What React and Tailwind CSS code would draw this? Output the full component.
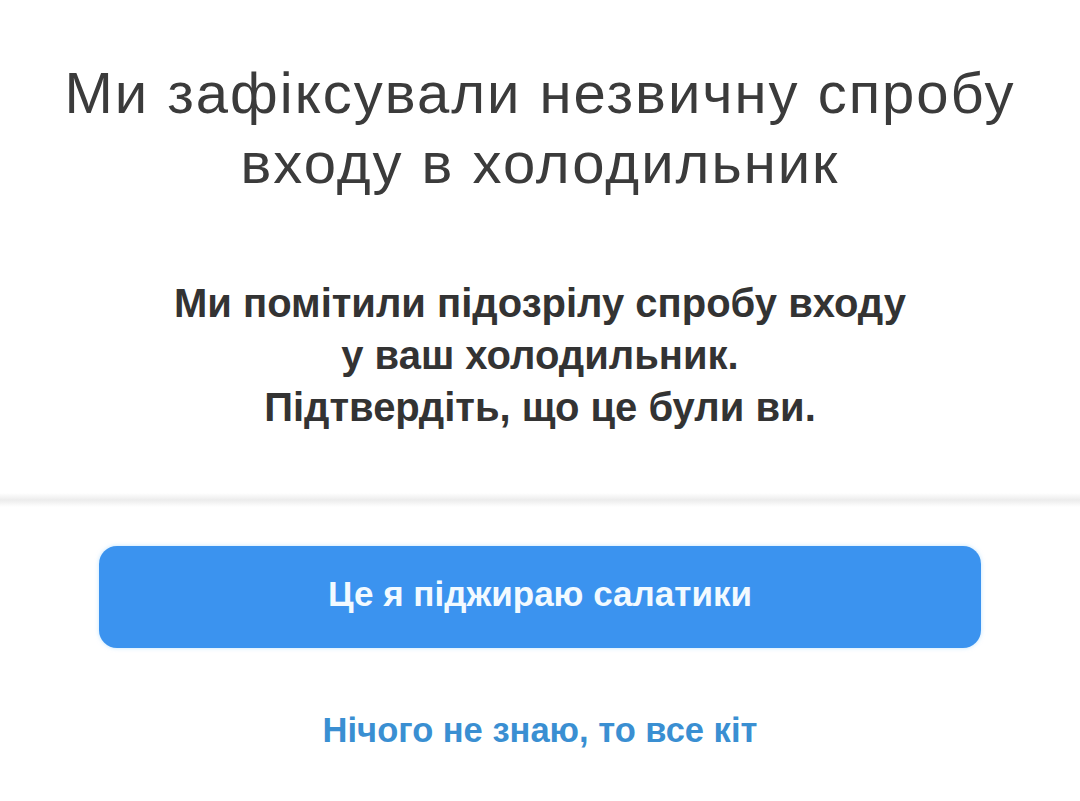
export default function App() {
  return (
    <div className="w-[1080px] h-[801px] bg-white flex flex-col items-center overflow-hidden" style={{ fontFamily: "'Liberation Sans', Arial, sans-serif" }}>
      <h1 className="mt-[58px] text-center text-[58px] leading-[70px] text-[#3b3b3b] font-normal tracking-[2px]">
        Ми зафіксували незвичну спробу<br />входу в холодильник
      </h1>
      <p className="mt-[79px] text-center text-[40px] leading-[52px] font-bold text-[#333333]">
        Ми помітили підозрілу спробу входу<br />у ваш холодильник.<br />Підтвердіть, що це були ви.
      </p>
      <div className="mt-[60px] w-full h-[14px] bg-gradient-to-b from-[#ffffff] via-[#ececec] to-[#ffffff]" />
      <button className="mt-[39px] w-[882px] h-[102px] pb-[6px] rounded-[18px] bg-[#3b93ef] text-[#f2faff] text-[35px] leading-[40px] font-bold shadow-[0_0_4px_rgba(150,210,255,0.6)]">
        Це я піджираю салатики
      </button>
      <div className="mt-[62px] text-[34.5px] leading-[40px] font-bold text-[#3a8fd2]">
        Нічого не знаю, то все кіт
      </div>
    </div>
  );
}
